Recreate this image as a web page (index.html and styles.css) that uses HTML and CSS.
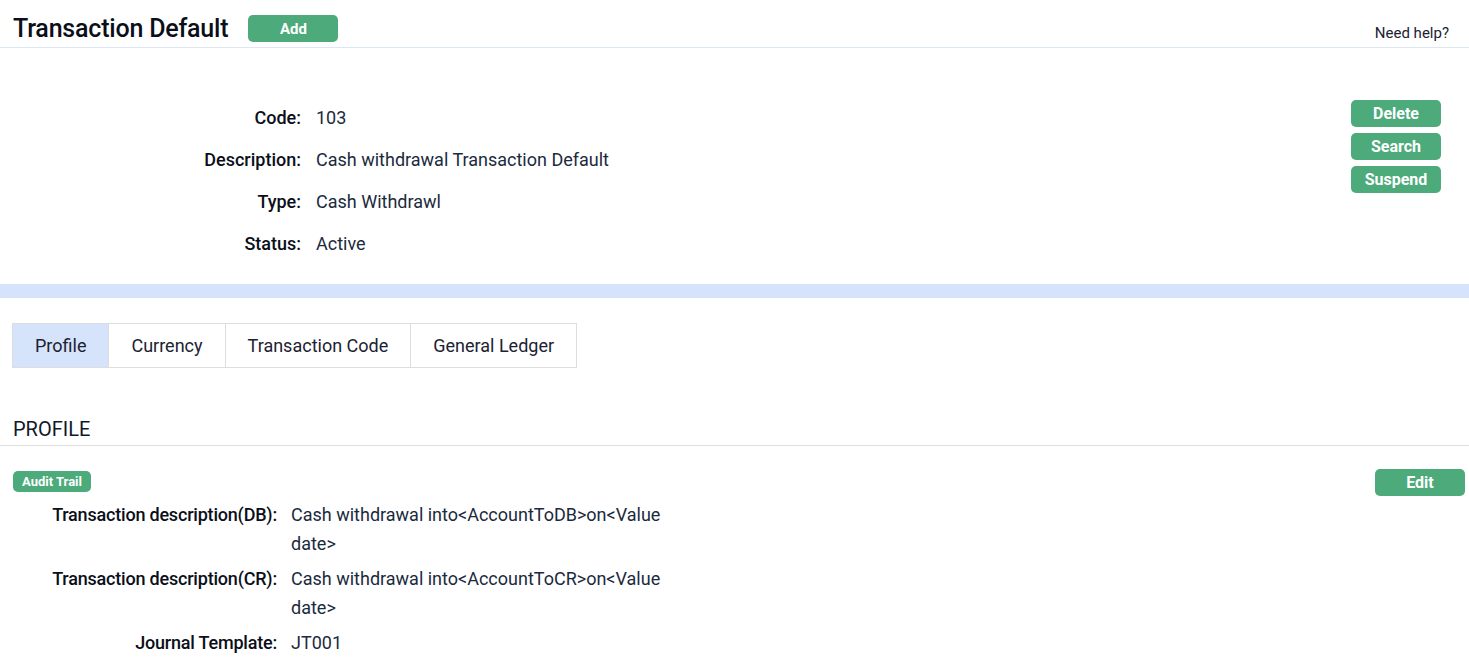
FILE: index.html
```html
<!DOCTYPE html>
<html>
<head>
<meta charset="utf-8">
<link rel="stylesheet" href="styles.css">
</head>
<body>
<header class="topbar">
  <div class="title-group">
    <h1 class="page-title">Transaction Default</h1>
    <button class="btn btn-add">Add</button>
  </div>
  <a class="help-link">Need help?</a>
</header>

<section class="summary">
  <dl class="summary-list">
    <dt>Code:</dt><dd>103</dd>
    <dt>Description:</dt><dd>Cash withdrawal Transaction Default</dd>
    <dt>Type:</dt><dd>Cash Withdrawl</dd>
    <dt>Status:</dt><dd>Active</dd>
  </dl>
  <div class="summary-actions">
    <button class="btn btn-action">Delete</button>
    <button class="btn btn-action">Search</button>
    <button class="btn btn-action">Suspend</button>
  </div>
</section>

<div class="band"></div>

<nav class="tabs">
  <div class="tab tab-active">Profile</div>
  <div class="tab">Currency</div>
  <div class="tab">Transaction Code</div>
  <div class="tab">General Ledger</div>
</nav>

<section class="profile">
  <h2 class="section-title">PROFILE</h2>
  <div class="profile-body">
    <div class="profile-main">
      <span class="badge">Audit Trail</span>
      <dl class="profile-list">
        <dt>Transaction description(DB):</dt><dd>Cash withdrawal into&lt;AccountToDB&gt;on&lt;Value date&gt;</dd>
        <dt>Transaction description(CR):</dt><dd>Cash withdrawal into&lt;AccountToCR&gt;on&lt;Value date&gt;</dd>
        <dt>Journal Template:</dt><dd>JT001</dd>
      </dl>
    </div>
    <button class="btn btn-action btn-edit">Edit</button>
  </div>
</section>
</body>
</html>
```

FILE: styles.css
```css
html, body {
  margin: 0;
  padding: 0;
  background: #ffffff;
  font-family: Roboto, "Noto Sans", sans-serif;
  color: #111827;
}

.topbar {
  display: flex;
  justify-content: space-between;
  align-items: flex-end;
  height: 48px;
  box-sizing: border-box;
  border-bottom: 1px solid #dbe6f7;
  padding: 0 20px 0 13px;
}

.title-group {
  display: flex;
  align-items: center;
  gap: 20px;
  padding-bottom: 4px;
}

.page-title {
  margin: 0;
  font-size: 25px;
  font-weight: 500;
  letter-spacing: -0.2px;
  color: #0b0f19;
}

.btn {
  border: none;
  background: #4caa7b;
  color: #ffffff;
  font-family: Roboto, "Noto Sans", sans-serif;
  font-weight: 700;
  border-radius: 5px;
  cursor: pointer;
  padding: 0;
}

.btn-add {
  width: 90px;
  height: 27px;
  font-size: 15px;
}

.help-link {
  font-size: 15px;
  color: #1b2232;
  padding-bottom: 5px;
}

.summary {
  display: flex;
  justify-content: space-between;
  padding: 49px 28px 19px 0;
}

.summary-list {
  display: grid;
  grid-template-columns: 301px auto;
  column-gap: 15px;
  row-gap: 0;
  margin: 0;
}

.summary-list dt,
.summary-list dd {
  margin: 0;
  line-height: 42px;
  font-size: 18px;
}

.summary-list dt {
  text-align: right;
  font-weight: 500;
  color: #0b0f19;
}

.summary-list dd {
  color: #1b2a3d;
}

.summary-actions {
  display: flex;
  flex-direction: column;
  gap: 6px;
  padding-top: 3px;
}

.btn-action {
  width: 90px;
  height: 27px;
  font-size: 16px;
}

.band {
  height: 14px;
  background: #d6e4fb;
}

.tabs {
  display: flex;
  margin: 25px 0 0 12px;
  width: max-content;
  border: 1px solid #dddddd;
}

.tab {
  height: 43px;
  line-height: 43px;
  font-size: 18px;
  color: #1b2232;
  padding: 0 22px;
  border-left: 1px solid #dddddd;
}

.tab:first-child {
  border-left: none;
}

.tab-active {
  background: #d6e4fb;
}

.profile {
  margin-top: 49px;
}

.section-title {
  margin: 0;
  padding: 0 13px 4px;
  font-size: 20px;
  font-weight: 400;
  color: #111827;
  border-bottom: 1px solid #dddddd;
}

.profile-body {
  display: flex;
  justify-content: space-between;
  padding: 25px 4px 0 13px;
}

.badge {
  display: inline-block;
  background: #4caa7b;
  color: #fff;
  font-weight: 700;
  font-size: 13px;
  line-height: 21px;
  padding: 0 9px;
  border-radius: 5px;
}

.profile-list {
  display: grid;
  grid-template-columns: 264px 380px;
  column-gap: 14px;
  row-gap: 6px;
  margin: 8px 0 0;
}

.profile-list dt,
.profile-list dd {
  margin: 0;
  font-size: 18px;
  line-height: 29px;
}

.profile-list dt {
  text-align: right;
  font-weight: 500;
  color: #0b0f19;
  letter-spacing: -0.2px;
}

.profile-list dd {
  color: #1b2a3d;
}

.btn-edit {
  margin-top: -2px;
}
```
